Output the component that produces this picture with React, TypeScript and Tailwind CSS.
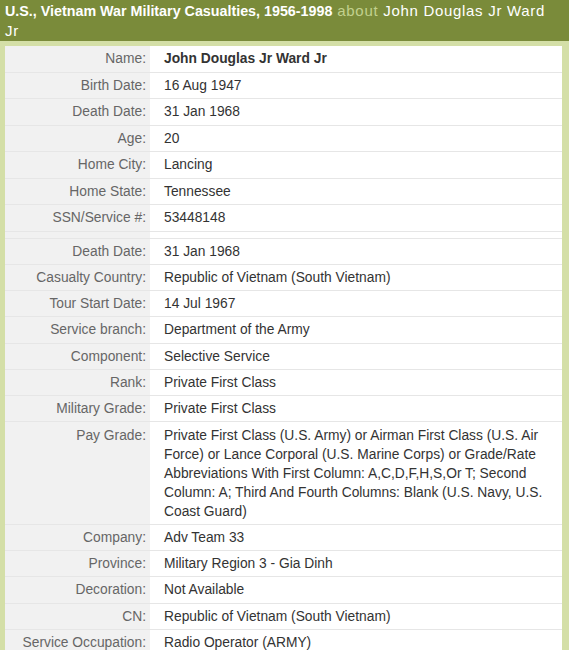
const rows: [string, string][] = [
  ['Birth Date:', '16 Aug 1947'],
  ['Death Date:', '31 Jan 1968'],
  ['Age:', '20'],
  ['Home City:', 'Lancing'],
  ['Home State:', 'Tennessee'],
  ['SSN/Service #:', '53448148'],
]

const rows2: [string, string][] = [
  ['Death Date:', '31 Jan 1968'],
  ['Casualty Country:', 'Republic of Vietnam (South Vietnam)'],
  ['Tour Start Date:', '14 Jul 1967'],
  ['Service branch:', 'Department of the Army'],
  ['Component:', 'Selective Service'],
  ['Rank:', 'Private First Class'],
  ['Military Grade:', 'Private First Class'],
  [
    'Pay Grade:',
    'Private First Class (U.S. Army) or Airman First Class (U.S. Air Force) or Lance Corporal (U.S. Marine Corps) or Grade/Rate Abbreviations With First Column: A,C,D,F,H,S,Or T; Second Column: A; Third And Fourth Columns: Blank (U.S. Navy, U.S. Coast Guard)',
  ],
  ['Company:', 'Adv Team 33'],
  ['Province:', 'Military Region 3 - Gia Dinh'],
  ['Decoration:', 'Not Available'],
  ['CN:', 'Republic of Vietnam (South Vietnam)'],
  ['Service Occupation:', 'Radio Operator (ARMY)'],
]

function Row({ label, value, bold, tight }: { label: string; value: string; bold?: boolean; tight?: boolean }) {
  const pad = tight ? 'py-[3.15px]' : 'py-[3.25px]'
  return (
    <div className="flex border-b border-[#e6e6e6]">
      <div className={`w-[145px] shrink-0 bg-[#f1f1f1] pr-[4px] ${pad} text-right text-[#666] leading-[19px] whitespace-nowrap`}>
        {label}
      </div>
      <div className={`flex-1 bg-white pl-[14px] pr-[10px] ${pad} text-[#333] leading-[19px] ${bold ? 'font-bold' : ''}`}>
        {value}
      </div>
    </div>
  )
}

export default function App() {
  return (
    <div className="w-[569px] h-[650px] overflow-hidden bg-[#d4dfa7] text-[13.8px]" style={{ fontFamily: '"Liberation Sans", Arial, sans-serif' }}>
      {/* Title bar */}
      <div className="bg-[#7a8b3a] pl-[5px] pr-[8px] pt-[1px] pb-[1px] text-[15px] leading-[19px] tracking-[0.7px] text-white">
        <span className="font-bold text-[14.3px] tracking-normal">U.S., Vietnam War Military Casualties, 1956-1998</span>{' '}
        <span className="text-[#c2d18e]">about</span> <span>John Douglas Jr Ward</span> <span>Jr</span>
      </div>

      {/* Record table */}
      <div className="mt-[5px] ml-[5px] mr-[7px]">
        <Row label="Name:" value="John Douglas Jr Ward Jr" bold />
        {rows.map(([l, v], i) => (
          <Row key={'a' + i} label={l} value={v} />
        ))}
        <div className="flex h-[7px] border-b border-[#e6e6e6]">
          <div className="w-[145px] bg-[#f1f1f1]" />
          <div className="flex-1 bg-white" />
        </div>
        {rows2.map(([l, v], i) => (
          <Row key={'b' + i} label={l} value={v} tight />
        ))}
      </div>
    </div>
  )
}
